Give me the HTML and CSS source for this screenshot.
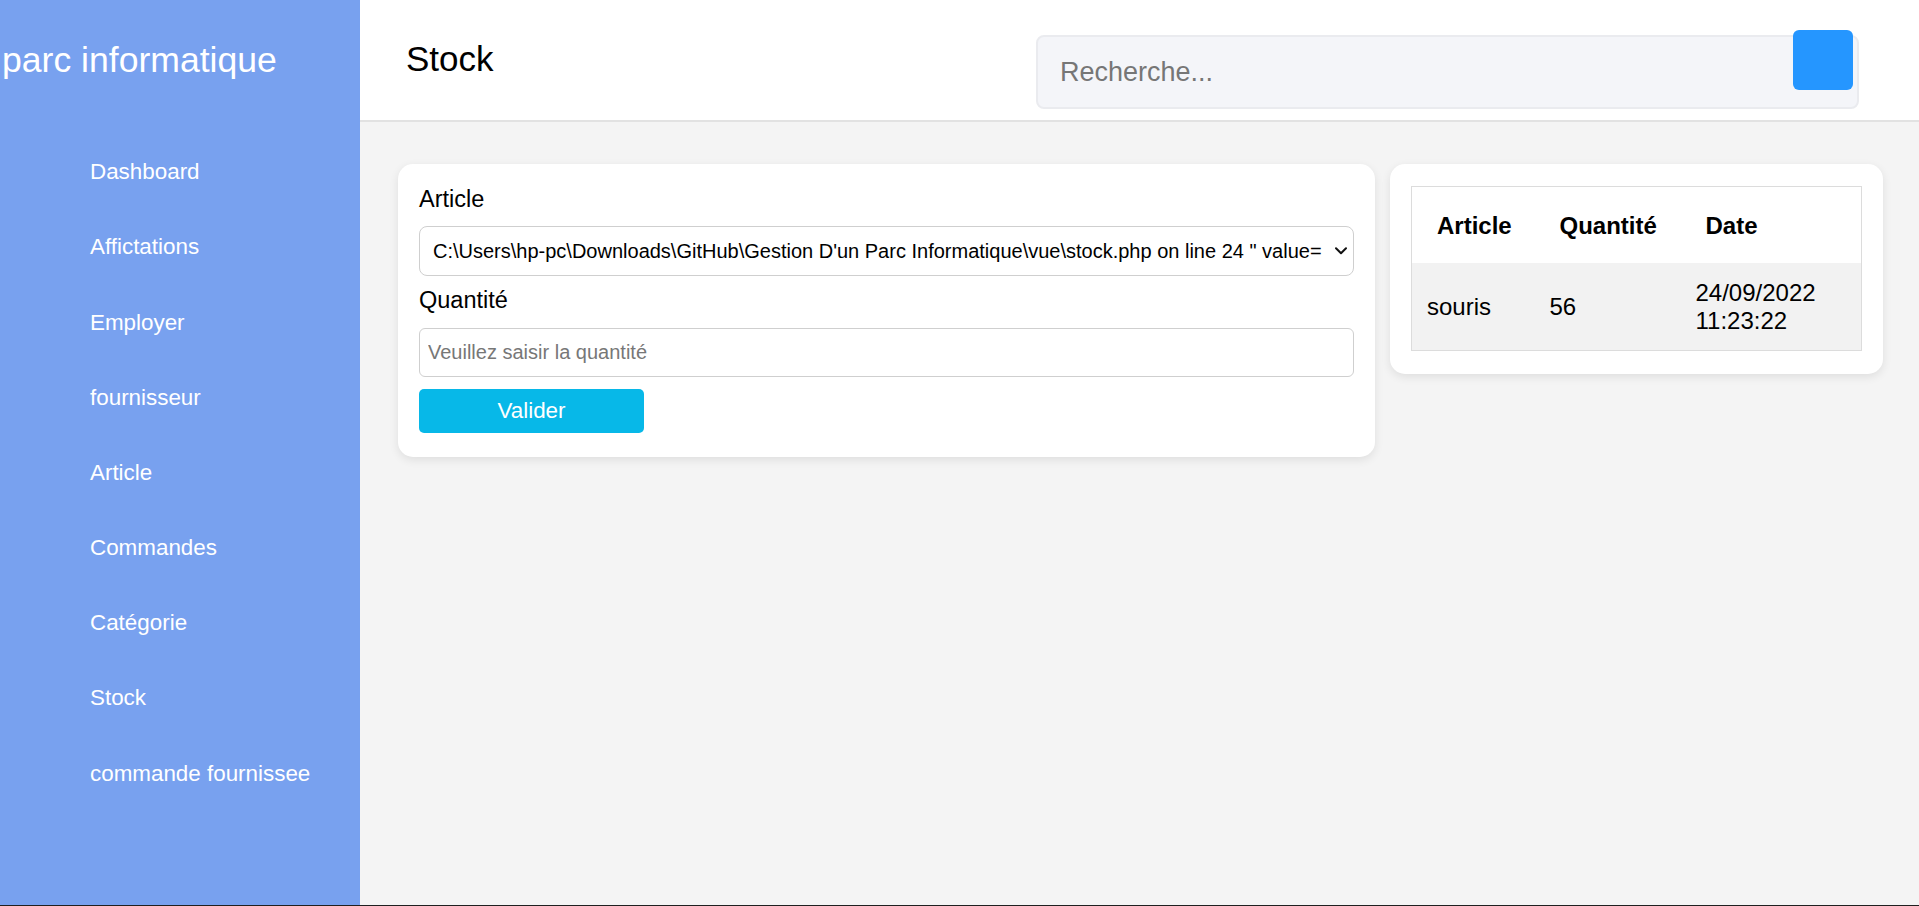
FILE: index.html
```html
<!DOCTYPE html>
<html lang="fr">
<head>
<meta charset="utf-8">
<title>Stock</title>
<link rel="stylesheet" href="styles.css">
</head>
<body>
<div class="layout">
  <aside class="sidebar">
    <h1 class="brand">parc informatique</h1>
    <ul class="nav">
      <li><a href="#">Dashboard</a></li>
      <li><a href="#">Affictations</a></li>
      <li><a href="#">Employer</a></li>
      <li><a href="#">fournisseur</a></li>
      <li><a href="#">Article</a></li>
      <li><a href="#">Commandes</a></li>
      <li><a href="#">Catégorie</a></li>
      <li><a href="#">Stock</a></li>
      <li><a href="#">commande fournissee</a></li>
    </ul>
  </aside>
  <div class="content">
    <header class="topbar">
      <h2 class="page-title">Stock</h2>
      <div class="search">
        <input class="search-input" type="text" placeholder="Recherche...">
        <button class="search-btn" type="button"></button>
      </div>
    </header>
    <main class="main">
      <section class="card form-card">
        <label class="field-label" for="article">Article</label>
        <div class="select-wrap">
          <select class="field-select" id="article">
            <option>C:\Users\hp-pc\Downloads\GitHub\Gestion D'un Parc Informatique\vue\stock.php on line 24 " value=</option>
          </select>
          <svg class="select-arrow" width="12" height="8" viewBox="0 0 12 8" aria-hidden="true">
            <path d="M1 1.2 L6 6.2 L11 1.2" fill="none" stroke="#111" stroke-width="2" stroke-linecap="round" stroke-linejoin="round"/>
          </svg>
        </div>
        <label class="field-label" for="qte">Quantité</label>
        <input class="field-input" id="qte" type="text" placeholder="Veuillez saisir la quantité">
        <button class="btn-submit" type="button">Valider</button>
      </section>
      <section class="card table-card">
        <table class="stock-table">
          <colgroup>
            <col class="col-article">
            <col class="col-qte">
            <col>
          </colgroup>
          <thead>
            <tr><th>Article</th><th>Quantité</th><th>Date</th></tr>
          </thead>
          <tbody>
            <tr><td>souris</td><td>56</td><td>24/09/2022 11:23:22</td></tr>
          </tbody>
        </table>
      </section>
    </main>
  </div>
</div>
</body>
</html>
```

FILE: styles.css
```css
* { box-sizing: border-box; }

html {
  background: #1f1f1f;
}

body {
  margin: 0;
  font-family: "Liberation Sans", Arial, sans-serif;
  color: #000;
}

.layout {
  display: flex;
  height: 905px;
  background: #f4f4f4;
}

.sidebar {
  width: 360px;
  flex: 0 0 360px;
  background: #78a1ef;
  padding-top: 39.5px;
  padding-left: 2px;
}

.brand {
  margin: 0;
  font-size: 35.6px;
  font-weight: normal;
  color: #fff;
  line-height: 41px;
  white-space: nowrap;
}

.nav {
  list-style: none;
  margin: 54px 0 0;
  padding: 0;
}

.nav a {
  display: block;
  padding: 24.7px 0 24.7px 88px;
  font-size: 22.4px;
  line-height: 25.8px;
  color: #fff;
  text-decoration: none;
}

.content {
  flex: 1;
  display: flex;
  flex-direction: column;
  min-width: 0;
}

.topbar {
  height: 122px;
  background: #fff;
  border-bottom: 2px solid #e2e2e2;
  display: flex;
  justify-content: space-between;
  align-items: flex-start;
  padding: 0 60px 0 46px;
}

.page-title {
  margin: 39px 0 0;
  font-size: 35px;
  font-weight: normal;
  line-height: 40px;
}

.search {
  position: relative;
  margin-top: 35px;
  width: 823px;
  height: 74px;
}

.search-input {
  width: 100%;
  height: 100%;
  border: 2px solid #eaebef;
  border-radius: 8px;
  background: #f4f5f9;
  padding: 0 80px 0 22px;
  font-family: "Liberation Sans", Arial, sans-serif;
  font-size: 27px;
  color: #333;
  outline: none;
}

.search-input::placeholder {
  color: #767676;
}

.search-btn {
  position: absolute;
  top: -5px;
  right: 6px;
  width: 60px;
  height: 60px;
  border: none;
  border-radius: 6px;
  background: #2596ff;
  padding: 0;
}

.main {
  flex: 1;
  display: grid;
  grid-template-columns: 977fr 493fr;
  gap: 15px;
  align-items: start;
  padding: 42px 36px 0 38px;
}

.card {
  background: #fff;
  border-radius: 15px;
  box-shadow: 0 3px 10px rgba(0, 0, 0, 0.09);
}

.form-card {
  display: flex;
  flex-direction: column;
  align-items: flex-start;
  padding: 22px 21px 24px;
}

.field-label {
  font-size: 23.5px;
  line-height: 26.3px;
  margin-bottom: 14px;
}

.select-wrap {
  position: relative;
  width: 100%;
  margin-bottom: 11px;
}

.field-select {
  display: block;
  width: 100%;
  height: 50px;
  border: 1px solid #cfcfcf;
  border-radius: 8px;
  background-color: #fff;
  -webkit-appearance: none;
  appearance: none;
  padding: 0 26px 0 13px;
  font-family: "Liberation Sans", Arial, sans-serif;
  font-size: 20px;
  color: #000;
  white-space: nowrap;
  overflow: hidden;
}

.select-arrow {
  position: absolute;
  right: 7px;
  top: 21px;
  pointer-events: none;
}

.field-input {
  width: 100%;
  height: 49px;
  border: 1px solid #cfcfcf;
  border-radius: 6px;
  padding: 0 8px;
  font-family: "Liberation Sans", Arial, sans-serif;
  font-size: 20px;
  margin-bottom: 12px;
}

.field-input::placeholder {
  color: #777;
}

.btn-submit {
  width: 225px;
  height: 44px;
  border: none;
  border-radius: 5px;
  background: #07b8e8;
  color: #fff;
  font-family: "Liberation Sans", Arial, sans-serif;
  font-size: 22.4px;
  padding: 0;
}

.table-card {
  padding: 22px 21px 23px;
}

.stock-table {
  width: 100%;
  border-collapse: collapse;
  border: 1px solid #dcdcdc;
  table-layout: fixed;
  font-size: 24px;
}

.col-article { width: 123px; }
.col-qte { width: 146px; }

.stock-table th {
  text-align: left;
  font-weight: bold;
  padding: 24.5px 10px 24.5px 25px;
  line-height: 27px;
  white-space: nowrap;
}

.stock-table td {
  background: #f2f2f2;
  padding: 16px 15px;
  line-height: 27.6px;
  vertical-align: middle;
}
```
